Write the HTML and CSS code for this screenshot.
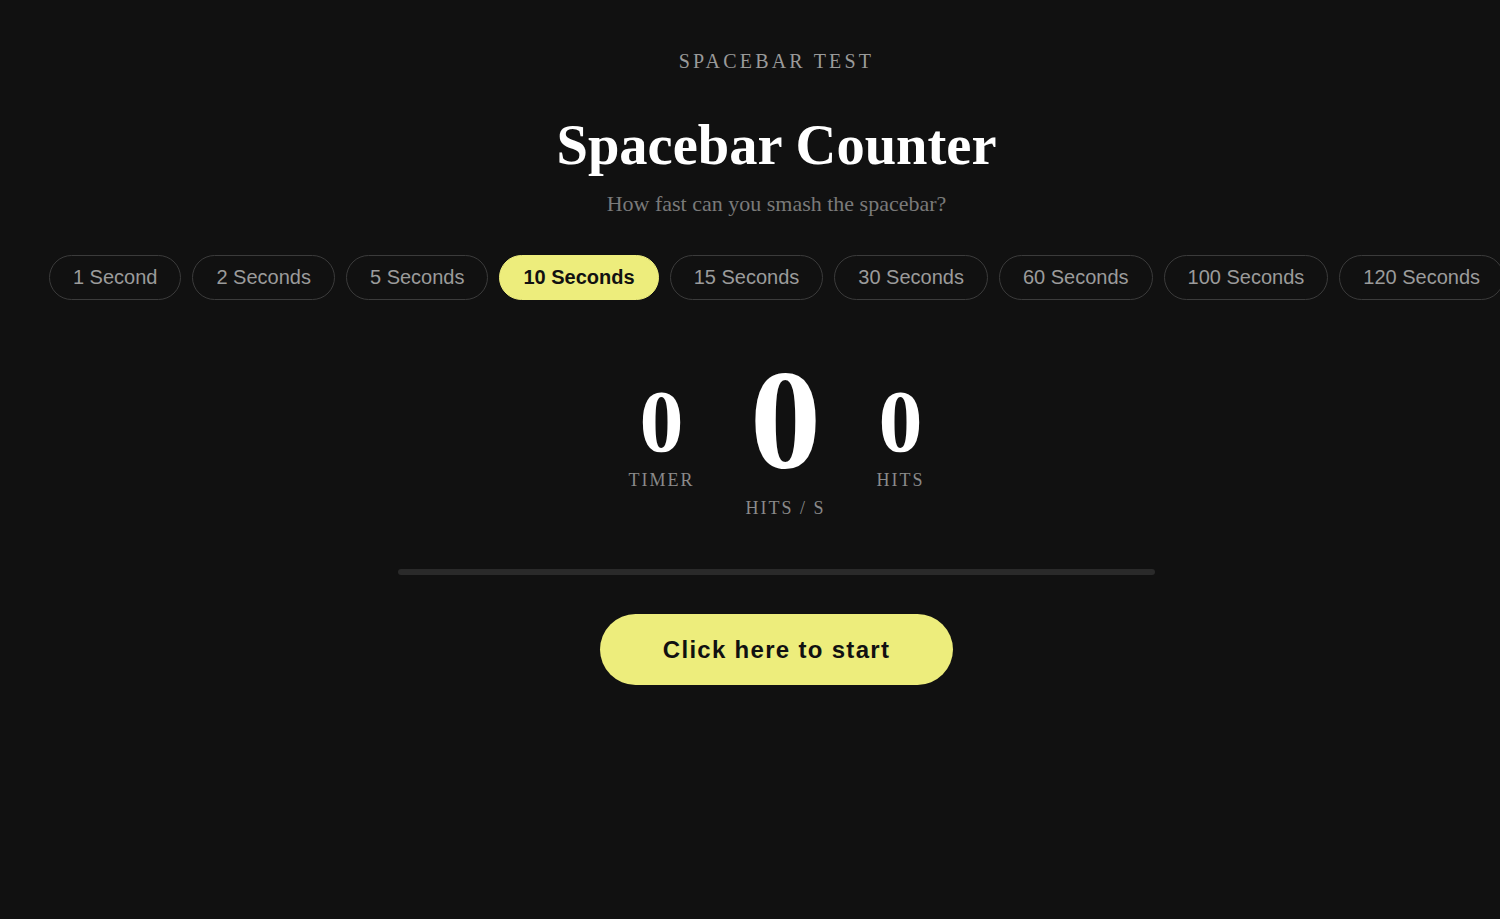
FILE: index.html
```html
<!DOCTYPE html>
<html lang="en">
<head>
<meta charset="utf-8">
<title>Spacebar Counter</title>
<link rel="stylesheet" href="styles.css">
</head>
<body>
<main class="page">
  <p class="eyebrow">SPACEBAR TEST</p>
  <h1 class="title">Spacebar Counter</h1>
  <p class="subtitle">How fast can you smash the spacebar?</p>

  <nav class="durations">
    <button class="pill">1 Second</button>
    <button class="pill">2 Seconds</button>
    <button class="pill">5 Seconds</button>
    <button class="pill pill-active">10 Seconds</button>
    <button class="pill">15 Seconds</button>
    <button class="pill">30 Seconds</button>
    <button class="pill">60 Seconds</button>
    <button class="pill">100 Seconds</button>
    <button class="pill">120 Seconds</button>
  </nav>

  <section class="stats">
    <div class="stat">
      <span class="stat-value">0</span>
      <span class="stat-label">TIMER</span>
    </div>
    <div class="stat stat-main">
      <span class="stat-value">0</span>
      <span class="stat-label">HITS / S</span>
    </div>
    <div class="stat">
      <span class="stat-value">0</span>
      <span class="stat-label">HITS</span>
    </div>
  </section>

  <div class="progress"><div class="progress-fill" style="width: 0%"></div></div>

  <button class="start">Click here to start</button>
</main>
</body>
</html>
```

FILE: styles.css
```css
html, body {
  margin: 0;
  padding: 0;
  background: #111111;
}

body {
  font-family: "Liberation Serif", "Times New Roman", serif;
  color: #ffffff;
  overflow: hidden;
}

.page {
  min-height: 919px;
  padding-left: 53px;
  display: flex;
  flex-direction: column;
  align-items: center;
  box-sizing: border-box;
}

.eyebrow {
  margin: 50px 0 0;
  font-size: 20px;
  letter-spacing: 3.2px;
  color: #9a9a9a;
}

.title {
  margin: 40px 0 0;
  font-size: 56.5px;
  font-weight: 700;
  color: #ffffff;
}

.subtitle {
  margin: 14px 0 0;
  font-size: 22px;
  color: #7a7a7a;
}

.durations {
  margin-top: 38px;
  display: flex;
  flex-wrap: nowrap;
  gap: 11px;
}

.pill {
  flex: none;
  font-family: "Liberation Sans", Arial, sans-serif;
  font-size: 20px;
  line-height: 23px;
  padding: 10px 23px;
  border: 1px solid #3b3b3b;
  border-radius: 999px;
  background: transparent;
  color: #9b9b9b;
  white-space: nowrap;
}

.pill-active {
  background: #eded7c;
  border-color: #eded7c;
  color: #111111;
  font-weight: 700;
}

.stats {
  margin-top: 49px;
  display: flex;
  align-items: center;
  gap: 51px;
}

.stat {
  display: flex;
  flex-direction: column;
  align-items: center;
}

.stat-value {
  font-size: 88px;
  line-height: 1;
  font-weight: 700;
  color: #ffffff;
}

.stat-label {
  margin-top: 4px;
  font-size: 18px;
  letter-spacing: 2px;
  color: #8a8a8a;
}

.stat-main .stat-value {
  font-size: 142px;
}

.stat-main .stat-label {
  margin-top: 7px;
}

.progress {
  margin-top: 50px;
  width: 757px;
  height: 6px;
  border-radius: 3px;
  background: #2a2a2a;
  overflow: hidden;
}

.progress-fill {
  height: 100%;
  background: #eded7c;
}

.start {
  margin-top: 39px;
  font-family: "Liberation Sans", Arial, sans-serif;
  font-size: 24px;
  line-height: 27px;
  font-weight: 700;
  letter-spacing: 1.3px;
  padding: 22px 63px;
  border: none;
  border-radius: 999px;
  background: #eded7c;
  color: #111111;
}
```
